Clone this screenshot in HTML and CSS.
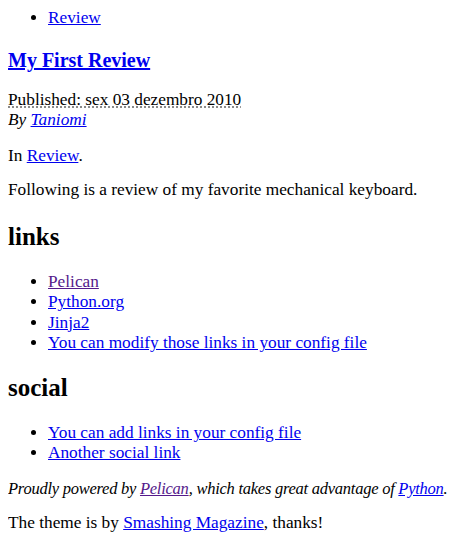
FILE: index.html
```html
<!DOCTYPE html>
<html lang="pt">
<head>
<meta charset="utf-8">
<title>My First Review</title>
<link rel="stylesheet" href="styles.css">
</head>
<body class="page">
<nav class="menu">
  <ul class="menu-list">
    <li><a class="link" href="#">Review</a></li>
  </ul>
</nav>
<article class="entry">
  <header>
    <h1 class="entry-title"><a class="link" href="#">My First Review</a></h1>
  </header>
  <footer class="post-info">
    <abbr class="published" title="2010-12-03T10:20:00">Published: sex 03 dezembro 2010</abbr>
    <address class="author">By <a class="link" href="#">Taniomi</a></address>
  </footer>
  <p class="category">In <a class="link" href="#">Review</a>.</p>
  <p class="summary">Following is a review of my favorite mechanical keyboard.</p>
</article>
<section class="blogroll">
  <h2 class="block-title">links</h2>
  <ul class="link-list">
    <li><a class="link visited" href="#">Pelican</a></li>
    <li><a class="link" href="#">Python.org</a></li>
    <li><a class="link" href="#">Jinja2</a></li>
    <li><a class="link" href="#">You can modify those links in your config file</a></li>
  </ul>
</section>
<section class="social">
  <h2 class="block-title social-title">social</h2>
  <ul class="link-list social-list">
    <li><a class="link" href="#">You can add links in your config file</a></li>
    <li><a class="link" href="#">Another social link</a></li>
  </ul>
</section>
<footer class="site-footer">
  <address class="about">Proudly powered by <a class="link visited" href="#">Pelican</a>, which takes great advantage of <a class="link" href="#">Python</a>.</address>
  <p class="credits">The theme is by <a class="link" href="#">Smashing Magazine</a>, thanks!</p>
</footer>
</body>
</html>
```

FILE: styles.css
```css
html {
  background: #ffffff;
}

.page {
  margin: 0 8px;
  padding-top: 8px;
  font-family: "Liberation Serif", "Times New Roman", serif;
  font-size: 17.3px;
  line-height: 20px;
  color: #000000;
}

.link {
  color: #0000ee;
  text-decoration: underline;
}

.link.visited {
  color: #551a8b;
}

.menu-list {
  margin: 0;
  padding-left: 40px;
}

.entry-title {
  margin: 20px 0 18px;
  font-size: 20px;
  line-height: 24px;
  font-weight: bold;
}

.post-info {
  line-height: 20px;
}

.published {
  text-decoration: underline dotted;
  text-decoration-color: #777777;
  text-underline-offset: 2px;
}

.author {
  font-style: italic;
}

.category {
  margin: 16px 0 0;
}

.summary {
  margin: 14px 0 0;
}

.block-title {
  margin: 23px 0 21px;
  font-size: 25px;
  line-height: 28px;
  font-weight: bold;
}

.social-title {
  margin-top: 21px;
  margin-bottom: 21px;
}

.link-list {
  margin: 0;
  padding-left: 40px;
  line-height: 20.3px;
}

.site-footer {
  margin-top: 15px;
}

.about {
  font-style: italic;
  font-size: 16.5px;
  letter-spacing: -0.25px;
  white-space: nowrap;
}

.credits {
  margin: 14px 0 0;
}
```
